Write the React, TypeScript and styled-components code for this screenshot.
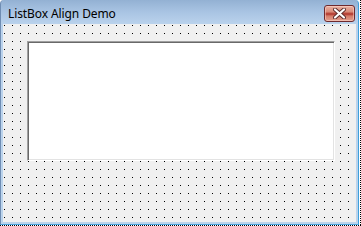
import styled, { createGlobalStyle } from 'styled-components';

const GlobalStyle = createGlobalStyle`
  html, body {
    margin: 0;
    padding: 0;
    background: #ffffff;
  }
  #root {
    width: 361px;
    height: 226px;
  }
`;

const Designer = styled.div`
  position: relative;
  width: 361px;
  height: 226px;
  overflow: hidden;

  /* the designer's dotted selection edge, right and bottom */
  &::after {
    content: '';
    position: absolute;
    right: 0;
    top: 0;
    width: 1px;
    height: 226px;
    background: repeating-linear-gradient(to bottom, #000 0 1px, transparent 1px 2px);
  }
  &::before {
    content: '';
    position: absolute;
    left: 0;
    bottom: 0;
    width: 361px;
    height: 1px;
    background: repeating-linear-gradient(to right, #000 0 1px, transparent 1px 2px);
  }
`;

const Frame = styled.div`
  width: 359px;
  height: 225px;
  box-sizing: border-box;
  display: flex;
  flex-direction: column;
  border-top-left-radius: 4px;
  border-top-right-radius: 4px;
  border: 1px solid #6f8db3;
  border-top: none;
  border-bottom-color: #4aa3dc;
  border-right-color: #3e9fdb;
  background: linear-gradient(to bottom, #93b1d3 0px, #a9c4e3 12px, #bad2ec 24px, #bcd4ec 100%);
`;

const TitleBar = styled.div`
  height: 24px;
  flex: none;
  display: flex;
  align-items: center;
  justify-content: space-between;
  padding: 0 3px 0 7px;
`;

const Caption = styled.span`
  font-family: 'Noto Sans', 'DejaVu Sans', sans-serif;
  font-size: 12px;
  color: #000;
  padding-top: 2px;
  letter-spacing: -0.1px;
`;

const CloseButton = styled.div`
  width: 31px;
  height: 17px;
  margin-top: 2px;
  box-sizing: border-box;
  border: 1px solid #6e2a2e;
  border-radius: 3px;
  display: flex;
  align-items: center;
  justify-content: center;
  background: linear-gradient(
    to bottom,
    #eab2a4 0%,
    #d88a78 40%,
    #b8453a 48%,
    #b8453a 58%,
    #d47b69 66%,
    #e2a08f 100%
  );
  box-shadow: inset 0 0 0 1px rgba(255, 220, 210, 0.5);
`;

/* 8px design grid: the top layer hides all but the first column of each tile,
   the bottom layer paints the first row black, so one pixel per tile stays black */
const Client = styled.div`
  flex: 1;
  margin: 0 2px 2px 2px;
  background-color: #f0f0f0;
  background-image:
    linear-gradient(to right, transparent 1px, #f0f0f0 1px),
    linear-gradient(to bottom, #000 1px, #f0f0f0 1px);
  background-size: 8px 8px;
  background-position: 1px 1px;
  padding: 17px 0 0 24px;
`;

const ListBox = styled.div`
  width: 308px;
  height: 120px;
  box-sizing: border-box;
  background: #ffffff;
  border: 1px solid;
  border-color: #a0a0a0 #ffffff #ffffff #a0a0a0;
  box-shadow: inset 1px 1px 0 #696969, inset -1px -1px 0 #e3e3e3;
`;

const CloseGlyph = () => (
  <svg width="13" height="11" viewBox="0 0 13 11">
    <path
      d="M2 1.5 L11 9.5 M11 1.5 L2 9.5"
      stroke="#5a2a2a"
      strokeWidth="4"
      strokeLinecap="round"
      fill="none"
    />
    <path
      d="M2 1.5 L11 9.5 M11 1.5 L2 9.5"
      stroke="#ffffff"
      strokeWidth="2.2"
      strokeLinecap="round"
      fill="none"
    />
  </svg>
);

export default function App() {
  return (
    <>
      <GlobalStyle />
      <Designer>
        <Frame>
          <TitleBar>
            <Caption>ListBox Align Demo</Caption>
            <CloseButton>
              <CloseGlyph />
            </CloseButton>
          </TitleBar>
          <Client>
            <ListBox />
          </Client>
        </Frame>
      </Designer>
    </>
  );
}
